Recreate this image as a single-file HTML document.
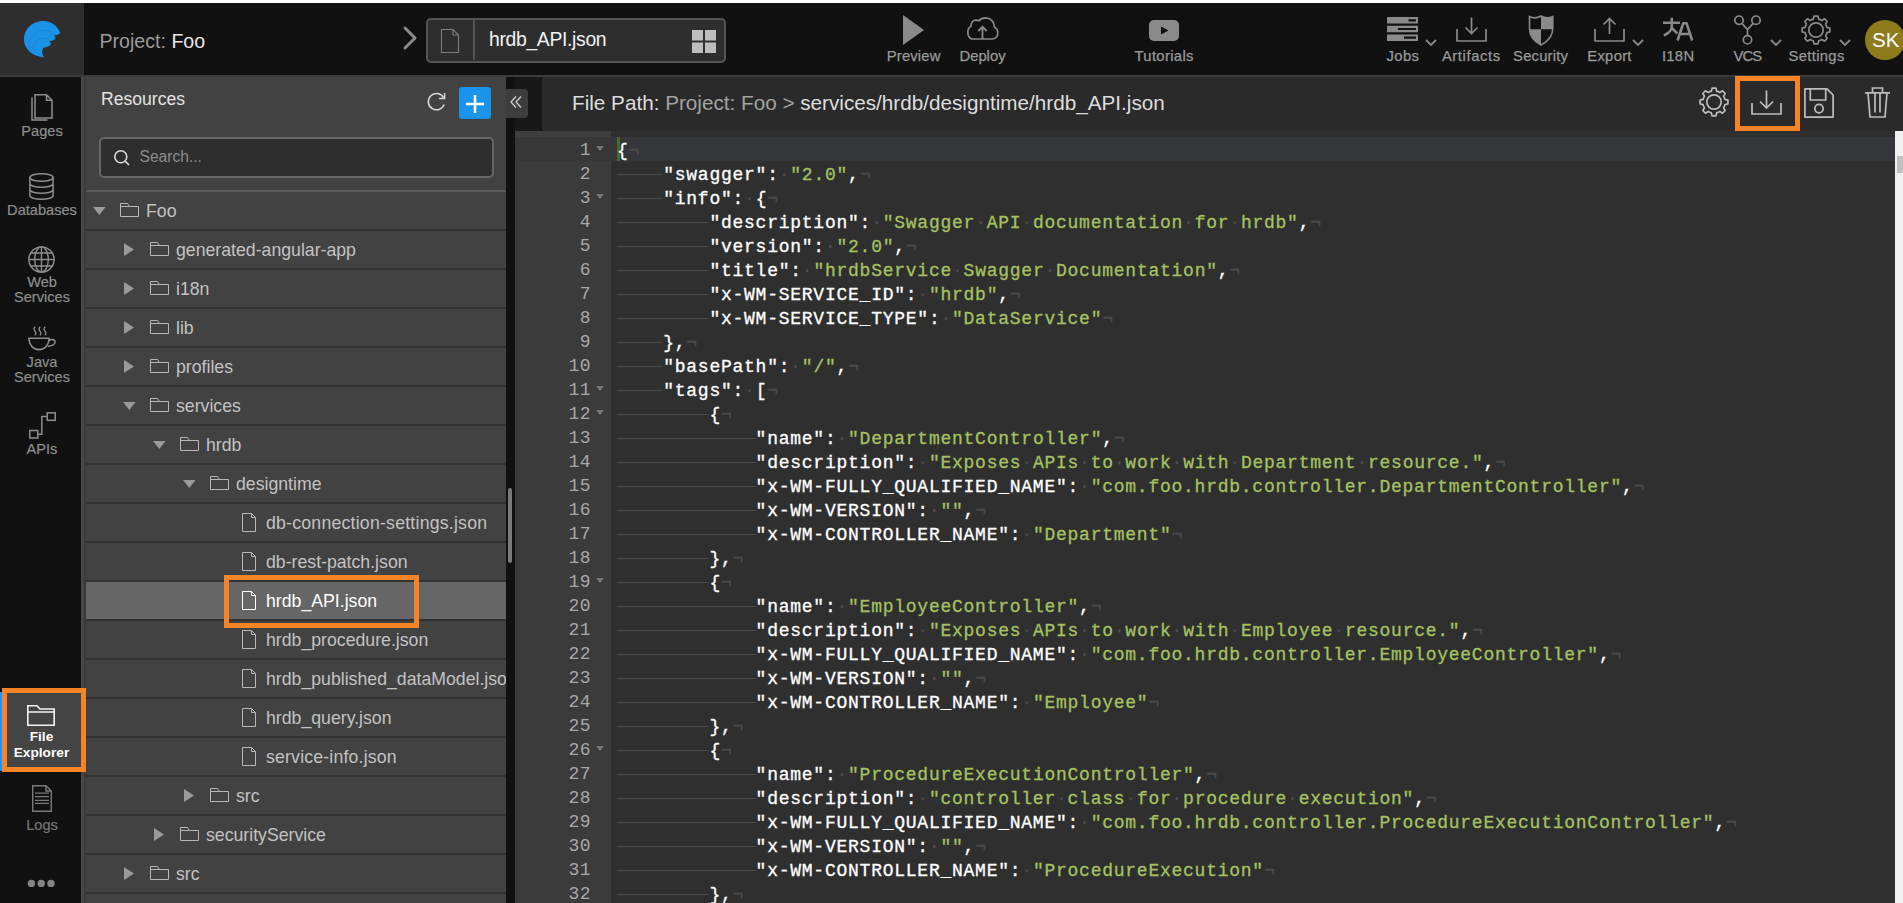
<!DOCTYPE html><html><head><meta charset="utf-8"><style>
*{box-sizing:border-box;margin:0;padding:0}
html,body{width:1903px;height:903px;overflow:hidden;background:#111;font-family:"Liberation Sans",sans-serif}
.a{position:absolute}
svg{position:absolute;overflow:visible}
.tb{position:absolute;top:48.2px;-webkit-text-stroke:0.25px #9a9a9a;color:#9a9a9a;font-size:14.8px;line-height:17px;width:100px;text-align:center;white-space:nowrap}
.ln{position:absolute;left:617px;height:24px;margin-top:2px;-webkit-text-stroke:0.3px currentColor;white-space:pre;font-family:"Liberation Mono",monospace;font-size:18px;letter-spacing:0.75px;line-height:24px;color:#fff}
.s{color:#a5c261}
.i{color:#4c4c4c}
.t{display:inline-block;vertical-align:top;height:24px;background-image:linear-gradient(90deg,#4c4c4c 92%,#3c3c3c 92%);background-size:11.5516px 1px;background-repeat:repeat-x;background-position:0 11px}
.g{position:absolute;left:515px;width:76px;height:24px;text-align:right;font-family:"Liberation Mono",monospace;font-size:18px;line-height:24px;color:#a8a8a8;letter-spacing:0.4px;margin-top:1px}
.row{position:absolute;left:86px;width:420px;height:39px;border-bottom:2px solid #333;overflow:hidden}
.rt{position:absolute;top:9px;font-size:17.7px;line-height:20px;color:#c2c2c2;white-space:nowrap}
.nav{position:absolute;left:1px;width:82px;-webkit-text-stroke:0.2px currentColor;text-align:center;color:#8e8e8e;font-size:14.6px;line-height:15px}
</style></head><body><div class="a" style="left:0;top:0;width:1903px;height:3px;background:#fff"></div><div class="a" style="left:0;top:3px;width:84px;height:72px;background:#2e2e2e"></div><div class="a" style="left:84px;top:3px;width:1819px;height:72px;background:#111"></div><div class="a" style="left:0;top:75px;width:1903px;height:2px;background:#3b3b3b"></div><div class="a" style="left:81px;top:77px;width:3px;height:826px;background:#474747"></div><div class="a" style="left:84px;top:77px;width:2px;height:826px;background:#3a3a3a"></div><div class="a" style="left:86px;top:77px;width:420px;height:826px;background:#424242"></div><div class="a" style="left:506px;top:77px;width:9px;height:826px;background:#111"></div><div class="a" style="left:515px;top:77px;width:27px;height:54px;background:#181818"></div><div class="a" style="left:542px;top:77px;width:1361px;height:54px;background:#2a2a2a"></div><div class="a" style="left:515px;top:131px;width:96px;height:772px;background:#3b3b3b"></div><div class="a" style="left:611px;top:131px;width:1284px;height:772px;background:#2f2f2f"></div><div class="a" style="left:515px;top:131px;width:96px;height:6px;background:#3e3e3e"></div><div class="a" style="left:611px;top:131px;width:1284px;height:6px;background:#2f2f2f"></div><div class="a" style="left:515px;top:137px;width:96px;height:24px;background:#373737"></div><div class="a" style="left:611px;top:137px;width:1284px;height:24px;background:#34363a"></div><div class="a" style="left:1895px;top:131px;width:8px;height:772px;background:#f1f1f1"></div><div class="a" style="left:1897px;top:156px;width:6px;height:17px;background:#c1c1c1"></div><div class="a" style="left:617px;top:137px;width:3px;height:24px;background:#4a6a2a"></div><div class="g" style="top:137px">1</div><svg style="left:596px;top:146px" width="8" height="6"><path d="M0 0H8L4 5Z" fill="#777"/></svg><div class="ln" style="top:137px">{<span class="i">¬</span></div><div class="g" style="top:161px">2</div><div class="ln" style="top:161px"><span class="t" style="width:46.206px"></span>&quot;swagger&quot;:<span class="i">·</span><span class="s">&quot;2.0&quot;</span>,<span class="i">¬</span></div><div class="g" style="top:185px">3</div><svg style="left:596px;top:194px" width="8" height="6"><path d="M0 0H8L4 5Z" fill="#777"/></svg><div class="ln" style="top:185px"><span class="t" style="width:46.206px"></span>&quot;info&quot;:<span class="i">·</span>{<span class="i">¬</span></div><div class="g" style="top:209px">4</div><div class="ln" style="top:209px"><span class="t" style="width:46.206px"></span><span class="t" style="width:46.206px"></span>&quot;description&quot;:<span class="i">·</span><span class="s">&quot;Swagger<span class="i">·</span>API<span class="i">·</span>documentation<span class="i">·</span>for<span class="i">·</span>hrdb&quot;</span>,<span class="i">¬</span></div><div class="g" style="top:233px">5</div><div class="ln" style="top:233px"><span class="t" style="width:46.206px"></span><span class="t" style="width:46.206px"></span>&quot;version&quot;:<span class="i">·</span><span class="s">&quot;2.0&quot;</span>,<span class="i">¬</span></div><div class="g" style="top:257px">6</div><div class="ln" style="top:257px"><span class="t" style="width:46.206px"></span><span class="t" style="width:46.206px"></span>&quot;title&quot;:<span class="i">·</span><span class="s">&quot;hrdbService<span class="i">·</span>Swagger<span class="i">·</span>Documentation&quot;</span>,<span class="i">¬</span></div><div class="g" style="top:281px">7</div><div class="ln" style="top:281px"><span class="t" style="width:46.206px"></span><span class="t" style="width:46.206px"></span>&quot;x-WM-SERVICE_ID&quot;:<span class="i">·</span><span class="s">&quot;hrdb&quot;</span>,<span class="i">¬</span></div><div class="g" style="top:305px">8</div><div class="ln" style="top:305px"><span class="t" style="width:46.206px"></span><span class="t" style="width:46.206px"></span>&quot;x-WM-SERVICE_TYPE&quot;:<span class="i">·</span><span class="s">&quot;DataService&quot;</span><span class="i">¬</span></div><div class="g" style="top:329px">9</div><div class="ln" style="top:329px"><span class="t" style="width:46.206px"></span>},<span class="i">¬</span></div><div class="g" style="top:353px">10</div><div class="ln" style="top:353px"><span class="t" style="width:46.206px"></span>&quot;basePath&quot;:<span class="i">·</span><span class="s">&quot;/&quot;</span>,<span class="i">¬</span></div><div class="g" style="top:377px">11</div><svg style="left:596px;top:386px" width="8" height="6"><path d="M0 0H8L4 5Z" fill="#777"/></svg><div class="ln" style="top:377px"><span class="t" style="width:46.206px"></span>&quot;tags&quot;:<span class="i">·</span>[<span class="i">¬</span></div><div class="g" style="top:401px">12</div><svg style="left:596px;top:410px" width="8" height="6"><path d="M0 0H8L4 5Z" fill="#777"/></svg><div class="ln" style="top:401px"><span class="t" style="width:46.206px"></span><span class="t" style="width:46.206px"></span>{<span class="i">¬</span></div><div class="g" style="top:425px">13</div><div class="ln" style="top:425px"><span class="t" style="width:46.206px"></span><span class="t" style="width:46.206px"></span><span class="t" style="width:46.206px"></span>&quot;name&quot;:<span class="i">·</span><span class="s">&quot;DepartmentController&quot;</span>,<span class="i">¬</span></div><div class="g" style="top:449px">14</div><div class="ln" style="top:449px"><span class="t" style="width:46.206px"></span><span class="t" style="width:46.206px"></span><span class="t" style="width:46.206px"></span>&quot;description&quot;:<span class="i">·</span><span class="s">&quot;Exposes<span class="i">·</span>APIs<span class="i">·</span>to<span class="i">·</span>work<span class="i">·</span>with<span class="i">·</span>Department<span class="i">·</span>resource.&quot;</span>,<span class="i">¬</span></div><div class="g" style="top:473px">15</div><div class="ln" style="top:473px"><span class="t" style="width:46.206px"></span><span class="t" style="width:46.206px"></span><span class="t" style="width:46.206px"></span>&quot;x-WM-FULLY_QUALIFIED_NAME&quot;:<span class="i">·</span><span class="s">&quot;com.foo.hrdb.controller.DepartmentController&quot;</span>,<span class="i">¬</span></div><div class="g" style="top:497px">16</div><div class="ln" style="top:497px"><span class="t" style="width:46.206px"></span><span class="t" style="width:46.206px"></span><span class="t" style="width:46.206px"></span>&quot;x-WM-VERSION&quot;:<span class="i">·</span><span class="s">&quot;&quot;</span>,<span class="i">¬</span></div><div class="g" style="top:521px">17</div><div class="ln" style="top:521px"><span class="t" style="width:46.206px"></span><span class="t" style="width:46.206px"></span><span class="t" style="width:46.206px"></span>&quot;x-WM-CONTROLLER_NAME&quot;:<span class="i">·</span><span class="s">&quot;Department&quot;</span><span class="i">¬</span></div><div class="g" style="top:545px">18</div><div class="ln" style="top:545px"><span class="t" style="width:46.206px"></span><span class="t" style="width:46.206px"></span>},<span class="i">¬</span></div><div class="g" style="top:569px">19</div><svg style="left:596px;top:578px" width="8" height="6"><path d="M0 0H8L4 5Z" fill="#777"/></svg><div class="ln" style="top:569px"><span class="t" style="width:46.206px"></span><span class="t" style="width:46.206px"></span>{<span class="i">¬</span></div><div class="g" style="top:593px">20</div><div class="ln" style="top:593px"><span class="t" style="width:46.206px"></span><span class="t" style="width:46.206px"></span><span class="t" style="width:46.206px"></span>&quot;name&quot;:<span class="i">·</span><span class="s">&quot;EmployeeController&quot;</span>,<span class="i">¬</span></div><div class="g" style="top:617px">21</div><div class="ln" style="top:617px"><span class="t" style="width:46.206px"></span><span class="t" style="width:46.206px"></span><span class="t" style="width:46.206px"></span>&quot;description&quot;:<span class="i">·</span><span class="s">&quot;Exposes<span class="i">·</span>APIs<span class="i">·</span>to<span class="i">·</span>work<span class="i">·</span>with<span class="i">·</span>Employee<span class="i">·</span>resource.&quot;</span>,<span class="i">¬</span></div><div class="g" style="top:641px">22</div><div class="ln" style="top:641px"><span class="t" style="width:46.206px"></span><span class="t" style="width:46.206px"></span><span class="t" style="width:46.206px"></span>&quot;x-WM-FULLY_QUALIFIED_NAME&quot;:<span class="i">·</span><span class="s">&quot;com.foo.hrdb.controller.EmployeeController&quot;</span>,<span class="i">¬</span></div><div class="g" style="top:665px">23</div><div class="ln" style="top:665px"><span class="t" style="width:46.206px"></span><span class="t" style="width:46.206px"></span><span class="t" style="width:46.206px"></span>&quot;x-WM-VERSION&quot;:<span class="i">·</span><span class="s">&quot;&quot;</span>,<span class="i">¬</span></div><div class="g" style="top:689px">24</div><div class="ln" style="top:689px"><span class="t" style="width:46.206px"></span><span class="t" style="width:46.206px"></span><span class="t" style="width:46.206px"></span>&quot;x-WM-CONTROLLER_NAME&quot;:<span class="i">·</span><span class="s">&quot;Employee&quot;</span><span class="i">¬</span></div><div class="g" style="top:713px">25</div><div class="ln" style="top:713px"><span class="t" style="width:46.206px"></span><span class="t" style="width:46.206px"></span>},<span class="i">¬</span></div><div class="g" style="top:737px">26</div><svg style="left:596px;top:746px" width="8" height="6"><path d="M0 0H8L4 5Z" fill="#777"/></svg><div class="ln" style="top:737px"><span class="t" style="width:46.206px"></span><span class="t" style="width:46.206px"></span>{<span class="i">¬</span></div><div class="g" style="top:761px">27</div><div class="ln" style="top:761px"><span class="t" style="width:46.206px"></span><span class="t" style="width:46.206px"></span><span class="t" style="width:46.206px"></span>&quot;name&quot;:<span class="i">·</span><span class="s">&quot;ProcedureExecutionController&quot;</span>,<span class="i">¬</span></div><div class="g" style="top:785px">28</div><div class="ln" style="top:785px"><span class="t" style="width:46.206px"></span><span class="t" style="width:46.206px"></span><span class="t" style="width:46.206px"></span>&quot;description&quot;:<span class="i">·</span><span class="s">&quot;controller<span class="i">·</span>class<span class="i">·</span>for<span class="i">·</span>procedure<span class="i">·</span>execution&quot;</span>,<span class="i">¬</span></div><div class="g" style="top:809px">29</div><div class="ln" style="top:809px"><span class="t" style="width:46.206px"></span><span class="t" style="width:46.206px"></span><span class="t" style="width:46.206px"></span>&quot;x-WM-FULLY_QUALIFIED_NAME&quot;:<span class="i">·</span><span class="s">&quot;com.foo.hrdb.controller.ProcedureExecutionController&quot;</span>,<span class="i">¬</span></div><div class="g" style="top:833px">30</div><div class="ln" style="top:833px"><span class="t" style="width:46.206px"></span><span class="t" style="width:46.206px"></span><span class="t" style="width:46.206px"></span>&quot;x-WM-VERSION&quot;:<span class="i">·</span><span class="s">&quot;&quot;</span>,<span class="i">¬</span></div><div class="g" style="top:857px">31</div><div class="ln" style="top:857px"><span class="t" style="width:46.206px"></span><span class="t" style="width:46.206px"></span><span class="t" style="width:46.206px"></span>&quot;x-WM-CONTROLLER_NAME&quot;:<span class="i">·</span><span class="s">&quot;ProcedureExecution&quot;</span><span class="i">¬</span></div><div class="g" style="top:881px">32</div><div class="ln" style="top:881px"><span class="t" style="width:46.206px"></span><span class="t" style="width:46.206px"></span>},<span class="i">¬</span></div><div class="a" style="left:86px;top:190px;width:420px;height:2px;background:#5a5a5a"></div><div class="row" style="top:192px;background:#424242"><svg style="left:7px;top:15px" width="13" height="8"><path d="M0 0H12.6L6.3 8Z" fill="#9a9a9a"/></svg><svg style="left:34px;top:11px" width="19" height="14"><path d="M0.5 13.5V0.5H7.5L9.5 3.5H18.5V13.5Z M0.5 3.5H9.5" fill="none" stroke="#b8b8b8" stroke-width="1"/></svg><div class="rt" style="left:60px">Foo</div></div><div class="row" style="top:231px;background:#424242"><svg style="left:38px;top:12px" width="10" height="13"><path d="M0 0L10 6.5L0 13Z" fill="#9a9a9a"/></svg><svg style="left:64px;top:11px" width="19" height="14"><path d="M0.5 13.5V0.5H7.5L9.5 3.5H18.5V13.5Z M0.5 3.5H9.5" fill="none" stroke="#b8b8b8" stroke-width="1"/></svg><div class="rt" style="left:90px">generated-angular-app</div></div><div class="row" style="top:270px;background:#424242"><svg style="left:38px;top:12px" width="10" height="13"><path d="M0 0L10 6.5L0 13Z" fill="#9a9a9a"/></svg><svg style="left:64px;top:11px" width="19" height="14"><path d="M0.5 13.5V0.5H7.5L9.5 3.5H18.5V13.5Z M0.5 3.5H9.5" fill="none" stroke="#b8b8b8" stroke-width="1"/></svg><div class="rt" style="left:90px">i18n</div></div><div class="row" style="top:309px;background:#424242"><svg style="left:38px;top:12px" width="10" height="13"><path d="M0 0L10 6.5L0 13Z" fill="#9a9a9a"/></svg><svg style="left:64px;top:11px" width="19" height="14"><path d="M0.5 13.5V0.5H7.5L9.5 3.5H18.5V13.5Z M0.5 3.5H9.5" fill="none" stroke="#b8b8b8" stroke-width="1"/></svg><div class="rt" style="left:90px">lib</div></div><div class="row" style="top:348px;background:#424242"><svg style="left:38px;top:12px" width="10" height="13"><path d="M0 0L10 6.5L0 13Z" fill="#9a9a9a"/></svg><svg style="left:64px;top:11px" width="19" height="14"><path d="M0.5 13.5V0.5H7.5L9.5 3.5H18.5V13.5Z M0.5 3.5H9.5" fill="none" stroke="#b8b8b8" stroke-width="1"/></svg><div class="rt" style="left:90px">profiles</div></div><div class="row" style="top:387px;background:#424242"><svg style="left:37px;top:15px" width="13" height="8"><path d="M0 0H12.6L6.3 8Z" fill="#9a9a9a"/></svg><svg style="left:64px;top:11px" width="19" height="14"><path d="M0.5 13.5V0.5H7.5L9.5 3.5H18.5V13.5Z M0.5 3.5H9.5" fill="none" stroke="#b8b8b8" stroke-width="1"/></svg><div class="rt" style="left:90px">services</div></div><div class="row" style="top:426px;background:#424242"><svg style="left:67px;top:15px" width="13" height="8"><path d="M0 0H12.6L6.3 8Z" fill="#9a9a9a"/></svg><svg style="left:94px;top:11px" width="19" height="14"><path d="M0.5 13.5V0.5H7.5L9.5 3.5H18.5V13.5Z M0.5 3.5H9.5" fill="none" stroke="#b8b8b8" stroke-width="1"/></svg><div class="rt" style="left:120px">hrdb</div></div><div class="row" style="top:465px;background:#424242"><svg style="left:97px;top:15px" width="13" height="8"><path d="M0 0H12.6L6.3 8Z" fill="#9a9a9a"/></svg><svg style="left:124px;top:11px" width="19" height="14"><path d="M0.5 13.5V0.5H7.5L9.5 3.5H18.5V13.5Z M0.5 3.5H9.5" fill="none" stroke="#b8b8b8" stroke-width="1"/></svg><div class="rt" style="left:150px">designtime</div></div><div class="row" style="top:504px;background:#424242"><svg style="left:156px;top:8.5px" width="14" height="19"><path d="M0.5 0.5H9.5L13.5 4.5V18.5H0.5Z M9.5 0.5V4.5H13.5" fill="none" stroke="#b8b8b8" stroke-width="1"/></svg><div class="rt" style="left:180px;letter-spacing:0.22px">db-connection-settings.json</div></div><div class="row" style="top:543px;background:#424242"><svg style="left:156px;top:8.5px" width="14" height="19"><path d="M0.5 0.5H9.5L13.5 4.5V18.5H0.5Z M9.5 0.5V4.5H13.5" fill="none" stroke="#b8b8b8" stroke-width="1"/></svg><div class="rt" style="left:180px">db-rest-patch.json</div></div><div class="row" style="top:582px;background:#666"><svg style="left:156px;top:8.5px" width="14" height="19"><path d="M0.5 0.5H9.5L13.5 4.5V18.5H0.5Z M9.5 0.5V4.5H13.5" fill="none" stroke="#fff" stroke-width="1"/></svg><div class="rt" style="left:180px;color:#fff">hrdb_API.json</div></div><div class="row" style="top:621px;background:#424242"><svg style="left:156px;top:8.5px" width="14" height="19"><path d="M0.5 0.5H9.5L13.5 4.5V18.5H0.5Z M9.5 0.5V4.5H13.5" fill="none" stroke="#b8b8b8" stroke-width="1"/></svg><div class="rt" style="left:180px">hrdb_procedure.json</div></div><div class="row" style="top:660px;background:#424242"><svg style="left:156px;top:8.5px" width="14" height="19"><path d="M0.5 0.5H9.5L13.5 4.5V18.5H0.5Z M9.5 0.5V4.5H13.5" fill="none" stroke="#b8b8b8" stroke-width="1"/></svg><div class="rt" style="left:180px">hrdb_published_dataModel.json</div></div><div class="row" style="top:699px;background:#424242"><svg style="left:156px;top:8.5px" width="14" height="19"><path d="M0.5 0.5H9.5L13.5 4.5V18.5H0.5Z M9.5 0.5V4.5H13.5" fill="none" stroke="#b8b8b8" stroke-width="1"/></svg><div class="rt" style="left:180px">hrdb_query.json</div></div><div class="row" style="top:738px;background:#424242"><svg style="left:156px;top:8.5px" width="14" height="19"><path d="M0.5 0.5H9.5L13.5 4.5V18.5H0.5Z M9.5 0.5V4.5H13.5" fill="none" stroke="#b8b8b8" stroke-width="1"/></svg><div class="rt" style="left:180px;letter-spacing:0.18px">service-info.json</div></div><div class="row" style="top:777px;background:#424242"><svg style="left:98px;top:12px" width="10" height="13"><path d="M0 0L10 6.5L0 13Z" fill="#9a9a9a"/></svg><svg style="left:124px;top:11px" width="19" height="14"><path d="M0.5 13.5V0.5H7.5L9.5 3.5H18.5V13.5Z M0.5 3.5H9.5" fill="none" stroke="#b8b8b8" stroke-width="1"/></svg><div class="rt" style="left:150px">src</div></div><div class="row" style="top:816px;background:#424242"><svg style="left:68px;top:12px" width="10" height="13"><path d="M0 0L10 6.5L0 13Z" fill="#9a9a9a"/></svg><svg style="left:94px;top:11px" width="19" height="14"><path d="M0.5 13.5V0.5H7.5L9.5 3.5H18.5V13.5Z M0.5 3.5H9.5" fill="none" stroke="#b8b8b8" stroke-width="1"/></svg><div class="rt" style="left:120px">securityService</div></div><div class="row" style="top:855px;background:#424242"><svg style="left:38px;top:12px" width="10" height="13"><path d="M0 0L10 6.5L0 13Z" fill="#9a9a9a"/></svg><svg style="left:64px;top:11px" width="19" height="14"><path d="M0.5 13.5V0.5H7.5L9.5 3.5H18.5V13.5Z M0.5 3.5H9.5" fill="none" stroke="#b8b8b8" stroke-width="1"/></svg><div class="rt" style="left:90px">src</div></div><div class="row" style="top:894px;background:#424242"><svg style="left:38px;top:12px" width="10" height="13"><path d="M0 0L10 6.5L0 13Z" fill="#9a9a9a"/></svg><svg style="left:64px;top:11px" width="19" height="14"><path d="M0.5 13.5V0.5H7.5L9.5 3.5H18.5V13.5Z M0.5 3.5H9.5" fill="none" stroke="#b8b8b8" stroke-width="1"/></svg><div class="rt" style="left:90px"></div></div><div class="a" style="left:508px;top:488px;width:4px;height:75px;background:#7a7a7a;border-radius:2px"></div><svg style="left:18px;top:15px" width="48" height="48"><path d="M25 5.9C33.5 5.9 40 11 42.2 18.3C40 20.2 37.5 20.6 35.6 20.5C37 21.5 37.6 22.5 37.4 23.6C35.5 25.8 33 26.3 30.8 26C32.3 27 33.1 28 32.9 29.2C31 31.6 28.5 32.6 25.9 32.5C23.8 34.5 23.6 39 26.1 42.2C14.5 41.8 5.9 34 5.9 24C5.9 14 14.5 5.9 25 5.9Z" fill="#1a93e6"/><path d="M11.5 33C10.5 24 16 16 25 15.5C29 15.3 32 16.3 34.5 18.2M15.5 35C15.5 28 19.5 23.5 25 23.2C27 23.1 29 23.6 30.5 24.5" fill="none" stroke="#1584d0" stroke-width="0.8"/></svg><div class="a" style="left:99.5px;top:29.7px;font-size:19.6px;line-height:22px;color:#9b9b9b;white-space:nowrap">Project: <span style="color:#e8e8e8">Foo</span></div><svg style="left:403px;top:26px" width="14" height="24"><path d="M2 2L12 12L2 22" fill="none" stroke="#8a8a8a" stroke-width="3" stroke-linecap="round" stroke-linejoin="round"/></svg><div class="a" style="left:426px;top:18px;width:300px;height:45px;border:2px solid #555;border-radius:5px;background:#2e2e2e"></div><div class="a" style="left:473px;top:20px;width:2px;height:40px;background:#555"></div><svg style="left:441px;top:29px" width="18" height="24"><path d="M0.5 0.5H12L17.5 6V23.5H0.5Z M12 0.5V6H17.5" fill="none" stroke="#7d7d7d" stroke-width="1.1"/></svg><div class="a" style="left:489px;top:28px;font-size:19.4px;line-height:22px;color:#f2f2f2;white-space:nowrap;letter-spacing:-0.35px">hrdb_API.json</div><svg style="left:692px;top:30px" width="24" height="23"><path d="M0 0H11V10.5H0ZM13 0H24V10.5H13ZM0 12.5H11V23H0ZM13 12.5H24V23H13Z" fill="#bdbdbd"/></svg><svg style="left:903px;top:15px" width="21" height="30"><path d="M0 0L21 15L0 30Z" fill="#8a8a8a"/></svg><div class="tb" style="left:863.68px;letter-spacing:0.15px">Preview</div><svg style="left:967px;top:17px" width="32" height="23"><path d="M5.8 22H25.2C28.5 22 30.8 19.3 30.8 16.3C30.8 13.5 29.3 11 27.3 10C27.3 4.5 23.5 0.8 18.6 0.8C15.6 0.8 13.3 2 11.9 3.8C11 3.3 10 3.1 9 3.1C6 3.1 4 5.8 4 9.2C1.8 10.3 0.8 12.8 0.8 15.5C0.8 19.2 3 22 5.8 22Z" fill="none" stroke="#8a8a8a" stroke-width="1.7" stroke-linejoin="round"/><path d="M15.5 22V10.2M11.3 14L15.5 9.8L19.7 14" fill="none" stroke="#8a8a8a" stroke-width="1.8"/></svg><div class="tb" style="left:932.50px;letter-spacing:0px">Deploy</div><svg style="left:1149px;top:20px" width="30" height="21"><rect x="0" y="0" width="30" height="21" rx="5" fill="#8a8a8a"/><path d="M12 6.5L19.5 10.5L12 14.5Z" fill="#111"/></svg><div class="tb" style="left:1114.17px;letter-spacing:0.35px">Tutorials</div><svg style="left:1387px;top:17px" width="31" height="24"><path d="M0 0H31V6.5H0ZM0 8.7H31V15.2H0ZM0 17.4H31V24H0Z" fill="#8a8a8a"/><path d="M21.5 2.2H29V4.4H21.5ZM11 10.9H29V13H11ZM17 19.6H29V21.8H17Z" fill="#111"/></svg><div class="tb" style="left:1352.90px;letter-spacing:0.4px">Jobs</div><svg style="left:1425px;top:39px" width="12" height="7"><path d="M1 1L6 6L11 1" fill="none" stroke="#8a8a8a" stroke-width="1.8"/></svg><svg style="left:1456px;top:17px" width="31" height="25"><path d="M1 12V24H30V12" fill="none" stroke="#8a8a8a" stroke-width="1.7" stroke-linejoin="round"/><path d="M15.5 0.5V16.5M9.5 10.5L15.5 16.5L21.5 10.5" fill="none" stroke="#8a8a8a" stroke-width="1.7"/></svg><div class="tb" style="left:1421.30px;letter-spacing:0.6px">Artifacts</div><svg style="left:1527.5px;top:14.5px" width="26" height="31"><path d="M1.5 1.5C5 3.3 9 3.3 13 1C17 3.3 21 3.3 24.8 1.5V13C24.8 21 20 26.5 13 30C6 26.5 1.5 21 1.5 13Z" fill="none" stroke="#8a8a8a" stroke-width="1.6"/><path d="M13 1.5C17 3.6 21 3.6 25 1.8V14.2H13Z M1.2 14.2H13V30C6 26.5 1.5 21 1.2 14.2Z" fill="#8a8a8a"/></svg><div class="tb" style="left:1490.60px;letter-spacing:0.2px">Security</div><svg style="left:1594px;top:17px" width="31" height="25"><path d="M1 12V24H30V12" fill="none" stroke="#8a8a8a" stroke-width="1.7" stroke-linejoin="round"/><path d="M15.5 17V1.5M9.5 7.5L15.5 1.5L21.5 7.5" fill="none" stroke="#8a8a8a" stroke-width="1.7"/></svg><div class="tb" style="left:1559.54px;letter-spacing:0.28px">Export</div><svg style="left:1632px;top:39px" width="12" height="7"><path d="M1 1L6 6L11 1" fill="none" stroke="#8a8a8a" stroke-width="1.8"/></svg><svg style="left:1662px;top:16.5px" width="32" height="25"><path d="M1 5.7H18M9.8 0.7V9C9.8 13 7 16.3 1.8 18.3M9.9 11L15.3 16.5" fill="none" stroke="#8a8a8a" stroke-width="2.5"/><path d="M15.6 23.5L21.2 6.3H24.6L30.2 23.5M18.3 17H27.5" fill="none" stroke="#8a8a8a" stroke-width="2.6" stroke-linejoin="round"/></svg><div class="tb" style="left:1628.15px;letter-spacing:0.3px">I18N</div><svg style="left:1734px;top:15px" width="27" height="30"><circle cx="5" cy="5.2" r="4.2" fill="none" stroke="#8a8a8a" stroke-width="1.7"/><circle cx="22" cy="5.2" r="4.2" fill="none" stroke="#8a8a8a" stroke-width="1.7"/><circle cx="13.5" cy="24.8" r="4.2" fill="none" stroke="#8a8a8a" stroke-width="1.7"/><path d="M7.8 8.3L13.5 14.5L19.2 8.3M13.5 14.5V20.6" fill="none" stroke="#8a8a8a" stroke-width="1.7"/></svg><div class="tb" style="left:1697.40px;letter-spacing:-0.8px">VCS</div><svg style="left:1770px;top:39px" width="12" height="7"><path d="M1 1L6 6L11 1" fill="none" stroke="#8a8a8a" stroke-width="1.8"/></svg><svg style="left:1801px;top:15px" width="30" height="30"><path d="M12.38 4.07L13.13 1.08L16.87 1.08L17.62 4.07A11.24 11.24 0 0 1 20.87 5.42L23.52 3.83L26.17 6.48L24.58 9.13A11.24 11.24 0 0 1 25.93 12.38L28.92 13.13L28.92 16.87L25.93 17.62A11.24 11.24 0 0 1 24.58 20.87L26.17 23.52L23.52 26.17L20.87 24.58A11.24 11.24 0 0 1 17.62 25.93L16.87 28.92L13.13 28.92L12.38 25.93A11.24 11.24 0 0 1 9.13 24.58L6.48 26.17L3.83 23.52L5.42 20.87A11.24 11.24 0 0 1 4.07 17.62L1.08 16.87L1.08 13.13L4.07 12.38A11.24 11.24 0 0 1 5.42 9.13L3.83 6.48L6.48 3.83L9.13 5.42A11.24 11.24 0 0 1 12.38 4.07Z" fill="none" stroke="#8a8a8a" stroke-width="1.7" stroke-linejoin="round"/><circle cx="15.0" cy="15.0" r="7.20" fill="none" stroke="#8a8a8a" stroke-width="1.7"/></svg><div class="tb" style="left:1766.57px;letter-spacing:0.33px">Settings</div><svg style="left:1839px;top:39px" width="12" height="7"><path d="M1 1L6 6L11 1" fill="none" stroke="#8a8a8a" stroke-width="1.8"/></svg><div class="a" style="left:1864.6px;top:20px;width:40px;height:40px;border-radius:50%;background:#8e7b1c"></div><div class="a" style="left:1872px;top:28px;font-size:20.5px;line-height:24px;color:#fff;white-space:nowrap">SK</div><svg style="left:29.2px;top:94px" width="24" height="27"><path d="M6 0.8H17.5L23 6.3V24H6Z M17.5 0.8V6.3H23" fill="none" stroke="#8e8e8e" stroke-width="1.5"/><path d="M3 3.5V26H18.5" fill="none" stroke="#8e8e8e" stroke-width="1.5"/></svg><div class="nav" style="top:123.8px;">Pages</div><svg style="left:29px;top:173px" width="25" height="27"><ellipse cx="12.5" cy="4.5" rx="11.6" ry="3.8" fill="none" stroke="#8e8e8e" stroke-width="1.5"/><path d="M0.9 4.5V22.5C0.9 24.6 6 26.3 12.5 26.3C19 26.3 24.1 24.6 24.1 22.5V4.5M0.9 10.5C0.9 12.6 6 14.3 12.5 14.3C19 14.3 24.1 12.6 24.1 10.5M0.9 16.5C0.9 18.6 6 20.3 12.5 20.3C19 20.3 24.1 18.6 24.1 16.5" fill="none" stroke="#8e8e8e" stroke-width="1.5"/></svg><div class="nav" style="top:202.7px;">Databases</div><svg style="left:28px;top:245.5px" width="27" height="27"><circle cx="13.5" cy="13.5" r="12.6" fill="none" stroke="#8e8e8e" stroke-width="1.5"/><ellipse cx="13.5" cy="13.5" rx="6.8" ry="12.6" fill="none" stroke="#8e8e8e" stroke-width="1.4"/><path d="M13.5 0.9V26.1M0.9 13.5H26.1M2.8 7H24.2M2.8 20H24.2" fill="none" stroke="#8e8e8e" stroke-width="1.4"/></svg><div class="nav" style="top:274.6px;">Web<br>Services</div><svg style="left:28px;top:326px" width="28" height="25"><path d="M0.8 12.3H21.2C20.8 19 17 23.6 11 23.6C5 23.6 1.2 19 0.8 12.3Z" fill="none" stroke="#8e8e8e" stroke-width="1.6" stroke-linejoin="round"/><path d="M20.8 14.6C23.5 12.6 27.2 13.2 27 16.2C26.8 18.8 24 19.8 19.8 20.3" fill="none" stroke="#8e8e8e" stroke-width="1.5"/><path d="M7.2 0.8C5.6 2.4 5.6 3.8 7 5.2C8.4 6.6 8.2 8 6.8 9.3M12.2 0.8C10.6 2.4 10.6 3.8 12 5.2C13.4 6.6 13.2 8 11.8 9.3M17.2 0.8C15.6 2.4 15.6 3.8 17 5.2C18.4 6.6 18.2 8 16.8 9.3" fill="none" stroke="#8e8e8e" stroke-width="1.3"/></svg><div class="nav" style="top:354.7px;">Java<br>Services</div><svg style="left:28.5px;top:412px" width="27" height="27"><rect x="0.8" y="18.5" width="8" height="7.5" fill="none" stroke="#8e8e8e" stroke-width="1.5"/><rect x="18.2" y="0.8" width="8" height="7.5" fill="none" stroke="#8e8e8e" stroke-width="1.5"/><path d="M8.8 22.2H12.8V4.5H18.2" fill="none" stroke="#8e8e8e" stroke-width="1.5"/></svg><div class="nav" style="top:441.7px;">APIs</div><div class="a" style="left:2px;top:688px;width:84px;height:84px;background:#444"></div><div class="a" style="left:0;top:692px;width:2px;height:79px;background:#1e90ff"></div><svg style="left:27px;top:705px" width="28" height="21"><path d="M0.8 20.2V0.8H10L13 4H27.2V20.2Z M0.8 7H27.2" fill="none" stroke="#f4f4f4" stroke-width="1.6"/></svg><div class="nav" style="top:728.7px;color:#fff;font-weight:bold;font-size:13.7px;line-height:16.4px;left:0.5px;-webkit-text-stroke:0">File<br>Explorer</div><svg style="left:32px;top:785px" width="20" height="27"><path d="M0.7 0.7H14L19.3 6V26.3H0.7Z M14 0.7V6H19.3" fill="none" stroke="#7a7a7a" stroke-width="1.4"/><path d="M3 8.2H17M3 11.6H17M3 15.3H17M3 18.4H17" fill="none" stroke="#7a7a7a" stroke-width="1.3"/></svg><div class="nav" style="top:817.6px;color:#777">Logs</div><svg style="left:27px;top:879px" width="30" height="9"><circle cx="4.4" cy="4.4" r="3.7" fill="#858585"/><circle cx="14.2" cy="4.4" r="3.7" fill="#858585"/><circle cx="24" cy="4.4" r="3.7" fill="#858585"/></svg><div class="a" style="left:101px;top:88.7px;font-size:17.6px;line-height:20px;color:#e2e2e2;white-space:nowrap">Resources</div><svg style="left:427px;top:92px" width="19" height="19"><path d="M16.6 5.5A8.2 8.2 0 1 0 17.2 12.5" fill="none" stroke="#d8d8d8" stroke-width="1.5"/><path d="M17.6 1V6.6H12" fill="none" stroke="#d8d8d8" stroke-width="1.5"/></svg><div class="a" style="left:459px;top:87px;width:32px;height:32px;border-radius:3px;background:#1a94ea"></div><svg style="left:466px;top:95px" width="18" height="18"><path d="M9 0V18M0 9H18" stroke="#fff" stroke-width="2.6"/></svg><div class="a" style="left:98.5px;top:136.5px;width:395px;height:41.5px;border:2px solid #666;border-radius:5px;background:#2e2e2e"></div><svg style="left:114px;top:150px" width="16" height="16"><circle cx="6.8" cy="6.8" r="6" fill="none" stroke="#dcdcdc" stroke-width="1.6"/><path d="M11 11L15 15" stroke="#dcdcdc" stroke-width="1.7"/></svg><div class="a" style="left:139.5px;top:148px;font-size:15.6px;line-height:18px;color:#8c8c8c;white-space:nowrap">Search...</div><div class="a" style="left:506px;top:89px;width:22px;height:29px;border-radius:0 4px 4px 0;background:#3d3d3d"></div><svg style="left:510px;top:96px" width="12" height="12"><path d="M6 0.5L1 6L6 11.5M11 0.5L6 6L11 11.5" fill="none" stroke="#cfcfcf" stroke-width="1.3"/></svg><div class="a" style="left:572px;top:90.7px;font-size:20.7px;line-height:24px;color:#dedede;white-space:nowrap">File Path: <span style="color:#a3a3a3">Project: Foo &gt;</span> services/hrdb/designtime/hrdb_API.json</div><svg style="left:1699px;top:86.5px" width="30" height="30"><path d="M12.38 4.07L13.13 1.08L16.87 1.08L17.62 4.07A11.24 11.24 0 0 1 20.87 5.42L23.52 3.83L26.17 6.48L24.58 9.13A11.24 11.24 0 0 1 25.93 12.38L28.92 13.13L28.92 16.87L25.93 17.62A11.24 11.24 0 0 1 24.58 20.87L26.17 23.52L23.52 26.17L20.87 24.58A11.24 11.24 0 0 1 17.62 25.93L16.87 28.92L13.13 28.92L12.38 25.93A11.24 11.24 0 0 1 9.13 24.58L6.48 26.17L3.83 23.52L5.42 20.87A11.24 11.24 0 0 1 4.07 17.62L1.08 16.87L1.08 13.13L4.07 12.38A11.24 11.24 0 0 1 5.42 9.13L3.83 6.48L6.48 3.83L9.13 5.42A11.24 11.24 0 0 1 12.38 4.07Z" fill="none" stroke="#bdbdbd" stroke-width="1.7" stroke-linejoin="round"/><circle cx="15.0" cy="15.0" r="7.20" fill="none" stroke="#bdbdbd" stroke-width="1.7"/></svg><svg style="left:1751px;top:90px" width="31" height="25"><path d="M1 13V24H30V13" fill="none" stroke="#bdbdbd" stroke-width="1.7" stroke-linejoin="round"/><path d="M15.5 0.5V18M9 11.5L15.5 18L22 11.5" fill="none" stroke="#bdbdbd" stroke-width="1.7"/></svg><svg style="left:1804px;top:88px" width="30" height="30"><path d="M0.9 0.9H23L29.1 7V29.1H0.9Z" fill="none" stroke="#bdbdbd" stroke-width="1.7" stroke-linejoin="round"/><path d="M6.3 0.9V12H21.7V0.9" fill="none" stroke="#bdbdbd" stroke-width="1.7"/><circle cx="15" cy="20.6" r="4.2" fill="none" stroke="#bdbdbd" stroke-width="1.7"/></svg><svg style="left:1865px;top:86.5px" width="25" height="31"><path d="M0 5.8H25M7.5 5.8V1H17.5V5.8M3 5.8L5 30H20L22 5.8M10 6.5V25.5M15 6.5V25.5" fill="none" stroke="#bdbdbd" stroke-width="1.7"/></svg><div class="a" style="left:2px;top:688px;width:84px;height:84px;border:5px solid #f58426"></div><div class="a" style="left:224px;top:575px;width:195px;height:53px;border:5px solid #f58426"></div><div class="a" style="left:1735px;top:76px;width:65px;height:55px;border:5px solid #f58426"></div></body></html>
